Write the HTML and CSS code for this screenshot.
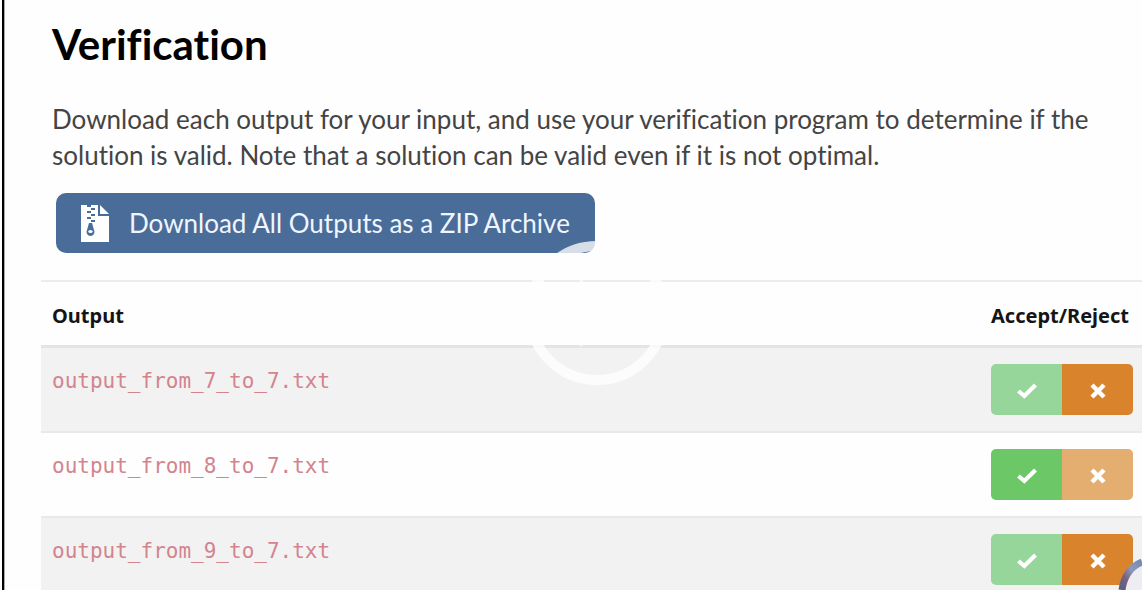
FILE: index.html
```html
<!DOCTYPE html>
<html lang="en">
<head>
<meta charset="utf-8">
<title>Verification</title>
<link rel="stylesheet" href="styles.css">
</head>
<body>
<svg class="defs" aria-hidden="true">
  <symbol id="check" viewBox="0 0 22 18"><path d="M2.5 9 8.3 14 19.5 3" fill="none" stroke="#fff" stroke-width="4.2"/></symbol>
  <symbol id="cross" viewBox="0 0 22 18"><path d="M5 3 17 15M17 3 5 15" fill="none" stroke="#fff" stroke-width="4.4"/></symbol>
</svg>
<main class="page">
  <h1 class="title">Verification</h1>
  <p class="intro">Download each output for your input, and use your verification program to determine if the solution is valid. Note that a solution can be valid even if it is not optimal.</p>
  <button class="download" type="button">
    <svg class="zip" viewBox="0 0 28 37" aria-hidden="true">
      <path d="M0 0H17V11H28V37H0Z" fill="#fff"/>
      <path d="M19 0 28 9H19Z" fill="#fff"/>
      <path d="M6 1h4M10 4h4M6 7h4M10 10h4M6 13h4M10 16h4" stroke="#4a6c98" stroke-width="2"/>
      <path d="M8 18h3l2 7a4 4 0 1 1-7 0Z" fill="#4a6c98"/>
      <ellipse cx="9.5" cy="26.5" rx="2.2" ry="1.6" fill="#fff"/>
    </svg>
    <span>Download All Outputs as a ZIP Archive</span>
  </button>
  <table class="outputs">
    <thead>
      <tr><th scope="col">Output</th><th scope="col" class="verdict">Accept/Reject</th></tr>
    </thead>
    <tbody>
      <tr>
        <td><code>output_from_7_to_7.txt</code></td>
        <td><div class="group"><button class="accept dim" type="button" aria-label="Accept"><svg class="mark"><use href="#check"/></svg></button><button class="reject" type="button" aria-label="Reject"><svg class="mark"><use href="#cross"/></svg></button></div></td>
      </tr>
      <tr>
        <td><code>output_from_8_to_7.txt</code></td>
        <td><div class="group"><button class="accept" type="button" aria-label="Accept"><svg class="mark"><use href="#check"/></svg></button><button class="reject dim" type="button" aria-label="Reject"><svg class="mark"><use href="#cross"/></svg></button></div></td>
      </tr>
      <tr>
        <td><code>output_from_9_to_7.txt</code></td>
        <td><div class="group"><button class="accept dim" type="button" aria-label="Accept"><svg class="mark"><use href="#check"/></svg></button><button class="reject" type="button" aria-label="Reject"><svg class="mark"><use href="#cross"/></svg></button></div></td>
      </tr>
    </tbody>
  </table>
</main>
<svg class="play" viewBox="0 0 144 144" aria-hidden="true">
  <circle cx="72" cy="72" r="67" fill="none" stroke="#fff" stroke-width="10"/>
  <path d="M55 38 108 72 55 106Z" fill="#fff"/>
</svg>
<svg class="corner" viewBox="0 0 24 34" aria-hidden="true">
  <defs><linearGradient id="ring" x1="0" y1="1" x2="1" y2="0"><stop offset="0" stop-color="#596083"/><stop offset=".3" stop-color="#79617f"/><stop offset=".6" stop-color="#8b9abb"/><stop offset="1" stop-color="#7389b2"/></linearGradient></defs>
  <path d="M24 6Q8 13 4 34H24Z" fill="#eeeef2"/>
  <path d="M24 6Q7 13 4 34" fill="none" stroke="url(#ring)" stroke-width="7"/>
</svg>
</body>
</html>
```
FILE: styles.css
```css
* { box-sizing: border-box; }
html { height: 100%; overflow: hidden; background: #fff; }
body {
  position: relative;
  height: 100%;
  margin: 0 0 0 2px;
  overflow: hidden;
  border-left: 2px solid #000;
  font-family: Lato, "Liberation Sans", sans-serif;
  font-variant-ligatures: none;
  color: #000;
}
.defs { position: absolute; width: 0; height: 0; }
.page {
  min-height: 100%;
  padding: 15px 0 0 36px;
  border-left: 1px solid #aaa;
  background: #fefefe;
}
.title { margin: 0 11px; font-size: 42px; line-height: 58px; font-weight: 700; }
.intro { margin: 28px 40px 0 11px; font-size: 26px; line-height: 36px; color: #444; }
.download {
  display: flex;
  align-items: center;
  gap: 20px;
  height: 60px;
  margin: 20px 0 27px 15px;
  padding: 0 25px;
  border: 0;
  border-radius: 10px;
  background: #4a6c98;
  color: #eff6ff;
  font-family: inherit;
  font-size: 26px;
  white-space: nowrap;
}
.zip { width: 28px; height: 37px; }
.outputs { width: 100%; border-collapse: separate; border-spacing: 0; }
.outputs th {
  height: 68px;
  padding: 3px 11px 0;
  border-top: 2px solid #ececec;
  border-bottom: 3px solid #e4e4e4;
  text-align: left;
  font: 700 20px "Noto Sans", sans-serif;
  color: #151515;
}
.outputs .verdict { width: 162px; }
.outputs td { height: 85px; padding: 16px 11px 0; vertical-align: top; border-bottom: 2px solid #e9e9e9; }
.outputs tbody tr:nth-child(odd) { background: #f2f2f2; }
.outputs code { font: 21px/34px "DejaVu Sans Mono", monospace; color: #d2848f; }
.outputs th:last-child, .outputs td:last-child { padding-right: 9px; }
.group { display: flex; width: 142px; height: 51px; border-radius: 5px; overflow: hidden; }
.group button { display: flex; flex: 1; align-items: center; justify-content: center; padding: 3px 0 0; border: 0; }
.accept { background: #6cc766; }
.accept.dim { background: #96d69a; }
.reject { background: #da832d; }
.reject.dim { background: #e4ae70; }
.mark { width: 22px; height: 18px; }
.play { position: absolute; top: 241px; left: 521px; width: 144px; height: 144px; opacity: .78; }
.corner { position: absolute; right: 0; bottom: 0; width: 24px; height: 34px; }
```
